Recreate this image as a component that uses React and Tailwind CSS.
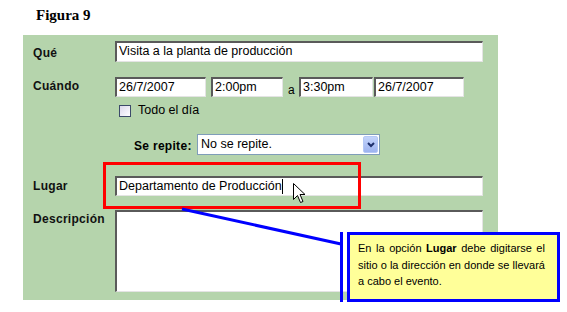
import React from "react";

const inputCls =
  "h-full bg-white border-t-2 border-l-2 border-r border-b border-t-[#5a5a5a] border-l-[#5a5a5a] border-r-[#e4e4e4] border-b-[#e4e4e4] pl-[2px] text-[12.5px] leading-[17px] text-black whitespace-nowrap";

function Label({ children, pt }) {
  return (
    <div className={`font-bold text-[12px] tracking-[0.3px] text-[#111] ${pt}`}>{children}</div>
  );
}

export default function App() {
  return (
    <div
      className="relative w-[567px] h-[312px] bg-white overflow-hidden"
      style={{ fontFamily: '"Liberation Sans", Arial, sans-serif' }}
    >
      <div
        className="pl-[36px] pt-[4px] h-[35px] text-[15px] font-bold text-black"
        style={{ fontFamily: '"Liberation Serif", "Times New Roman", serif' }}
      >
        Figura 9
      </div>

      <div className="ml-[23px] w-[475px] h-[265px] bg-[#b5d4ac] pl-[10px] pr-[15px] pt-[6px] flex flex-col">
        {/* Qué */}
        <div className="flex h-[21px]">
          <div className="w-[82px]">
            <Label pt="pt-[3px]">Qué</Label>
          </div>
          <div className={`${inputCls} flex-1`}>Visita a la planta de producción</div>
        </div>

        {/* Cuándo */}
        <div className="flex h-[20px] mt-[15px]">
          <div className="w-[82px]">
            <Label pt="pt-0">Cuándo</Label>
          </div>
          <div className="flex items-stretch">
            <div className={`${inputCls} w-[91px]`}>26/7/2007</div>
            <div className={`${inputCls} w-[72px] ml-[5px]`}>2:00pm</div>
            <div className="w-[16px] text-[12px] pl-[5px] pt-[4px]">a</div>
            <div className={`${inputCls} w-[74px]`}>3:30pm</div>
            <div className={`${inputCls} w-[90px] ml-[1px]`}>26/7/2007</div>
          </div>
        </div>

        {/* Todo el día */}
        <div className="flex h-[13px] mt-[7px]">
          <div className="w-[82px]" />
          <div className="flex items-center">
            <div className="ml-[4px] w-[12px] h-[12px] border border-[#3c4a6a] bg-gradient-to-br from-[#dcd8ec] to-white" />
            <span className="ml-[7px] text-[12.5px] leading-[13px]">Todo el día</span>
          </div>
        </div>

        {/* Se repite */}
        <div className="flex h-[21px] mt-[17px]">
          <div className="w-[82px]" />
          <div className="flex items-center pl-[19px]">
            <span className="font-bold text-[12px] tracking-[0.3px] w-[63px] pt-[3px]">Se repite:</span>
            <div className="w-[183px] h-[21px] bg-white border border-[#7f9db9] flex items-center justify-between">
              <span className="pl-[3px] text-[12.5px]">No se repite.</span>
              <div className="w-[15px] h-[17px] mr-[1px] rounded-[2px] bg-gradient-to-b from-[#c4d4fb] to-[#9db3ef] border border-[#b4c8f6] flex items-center justify-center">
                <svg width="8" height="6" viewBox="0 0 8 6">
                  <path d="M1 1 L4 4 L7 1" stroke="#1d2f6b" strokeWidth="2" fill="none" />
                </svg>
              </div>
            </div>
          </div>
        </div>

        {/* Lugar */}
        <div className="flex h-[20px] mt-[21px]">
          <div className="w-[82px]">
            <Label pt="pt-[1px]">Lugar</Label>
          </div>
          <div className={`${inputCls} flex-1`}>
            Departamento de Producción<span className="inline-block w-[1px] h-[15px] bg-black align-middle" />
          </div>
        </div>

        {/* Descripción */}
        <div className="flex h-[82px] mt-[14px]">
          <div className="w-[82px]">
            <Label pt="pt-0">Descripción</Label>
          </div>
          <div className={`${inputCls} flex-1`} />
        </div>
      </div>

      {/* red highlight */}
      <div className="absolute left-[103px] top-[162px] w-[258px] h-[47px] border-[3px] border-[#ff0000]" />

      {/* connector lines */}
      <svg className="absolute left-0 top-0" width="567" height="312">
        <line x1="182" y1="209" x2="341" y2="244" stroke="#0000ff" strokeWidth="3" />
        <line x1="341.5" y1="232" x2="341.5" y2="302" stroke="#0000ff" strokeWidth="3" />
      </svg>

      {/* callout */}
      <div className="absolute left-[347px] top-[232px] w-[213px] h-[70px] border-[3px] border-[#0000ff] bg-[#ffff99] pl-[8px] pr-[12px] pt-[5px] text-[11px] leading-[16.5px] text-black">
        <div className="whitespace-nowrap flex justify-between">
          <span>En</span><span>la</span><span>opción</span><b>Lugar</b><span>debe</span><span>digitarse</span><span>el</span>
        </div>
        <div className="whitespace-nowrap flex justify-between">
          <span>sitio</span><span>o</span><span>la</span><span>dirección</span><span>en</span><span>donde</span><span>se</span><span>llevará</span>
        </div>
        <div>a cabo el evento.</div>
      </div>

      {/* mouse cursor */}
      <svg className="absolute left-[293px] top-[183px]" width="13" height="21" viewBox="0 0 13 21">
        <path
          d="M0.5 0.5 L0.5 16.5 L4.5 12.5 L7.5 19.5 L10 18.5 L7 11.5 L12 11.5 Z"
          fill="white"
          stroke="black"
          strokeWidth="1"
        />
      </svg>
    </div>
  );
}
